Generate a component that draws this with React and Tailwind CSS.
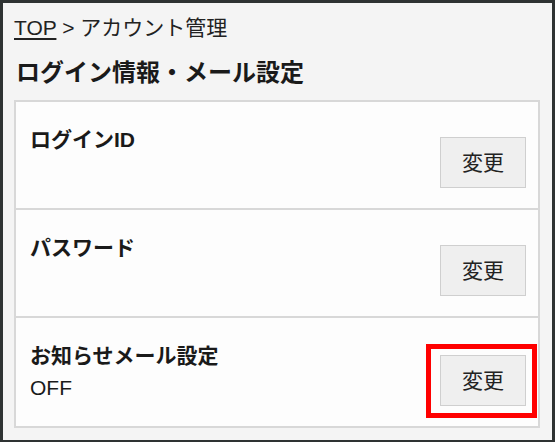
import React from "react";

const rows = [
  { label: "ログインID" },
  { label: "パスワード" },
  { label: "お知らせメール設定", value: "OFF", marked: true },
];

const App = () => {
  return (
    <div
      className="w-[555px] h-[442px] box-border border-[3px] border-b-2 border-[#2e3232] bg-[#f4f4f4] text-[#1a1a1a] overflow-hidden"
      style={{ fontFamily: '"Liberation Sans", "Noto Sans CJK JP", sans-serif' }}
    >
      <div className="pl-[11px] pr-[12px] pt-[11px]">
        {/* breadcrumb */}
        <div className="text-[21px] leading-[28px] text-[#222]">
          <span className="underline underline-offset-[3px]">TOP</span> &gt; アカウント管理
        </div>

        <h1 className="mt-[15px] mb-[11px] text-[24px] leading-[32px] font-bold pl-[2px]">
          ログイン情報・メール設定
        </h1>

        {/* settings card */}
        <div className="border-2 border-[#d8d8d8] bg-[#fdfdfd]">
          {rows.map((row, i) => (
            <div
              key={row.label}
              className={
                "flex justify-between items-end h-[108px] pl-[14px] pr-[12px] pt-[24px] pb-[20px]" +
                (i < rows.length - 1 ? " border-b-2 border-[#d8d8d8]" : "")
              }
            >
              <div className="self-start">
                <div className="text-[21px] leading-[28px] font-bold">{row.label}</div>
                {row.value && (
                  <div className="text-[21px] leading-[28px] mt-[4px]">{row.value}</div>
                )}
              </div>
              <div className="relative">
                <button className="w-[86px] h-[51px] bg-[#efefef] border border-[#cfcfcf] text-[21px] text-[#222]">
                  変更
                </button>
                {row.marked && (
                  <div className="absolute -left-[14px] -right-[11px] -top-[11px] -bottom-[12px] border-[5px] border-[#ff0000]" />
                )}
              </div>
            </div>
          ))}
        </div>
      </div>
    </div>
  );
};

export default App;
